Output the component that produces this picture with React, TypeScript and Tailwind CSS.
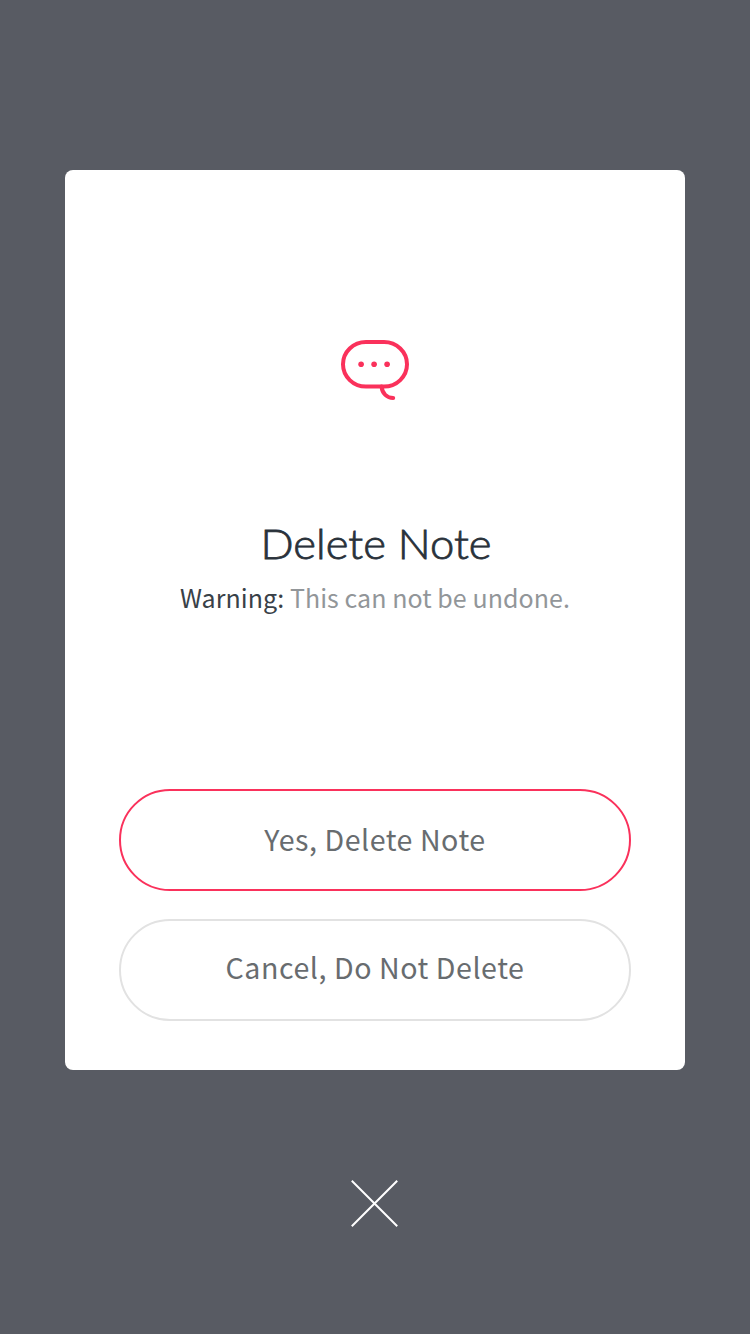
function NoteIcon() {
  return (
    <svg className="mt-[168px] block" width="72" height="64" viewBox="0 0 72 64" fill="none" stroke="#fa315b" strokeWidth="4" strokeLinecap="round">
      <rect x="4" y="4" width="64" height="44.6" rx="23" />
      <path d="M42.6 48.5C43.1 55.5 48 60 54.2 60" />
      <g fill="#fa315b" stroke="none">
        <circle cx="22.1" cy="26.2" r="2.8" />
        <circle cx="35.1" cy="26.2" r="2.8" />
        <circle cx="48.1" cy="26.2" r="2.8" />
      </g>
    </svg>
  );
}

export default function App() {
  return (
    <main className="flex h-[1334px] w-[750px] flex-col items-center bg-[#585b63] pt-[170px] font-['Noto_Sans_CJK_JP',sans-serif]">
      <section className="flex h-[900px] w-[620px] flex-col items-center rounded-lg bg-white">
        <NoteIcon />
        <h1 className="mt-[116px] h-[50px] scale-x-[1.05] whitespace-nowrap pl-[1px] font-['Lato',sans-serif] text-[41.5px] leading-[50px] font-light text-[#29313a] [-webkit-text-stroke:0.8px_#29313a]">
          Delete Note
        </h1>
        <p className="mt-[9px] h-[40px] whitespace-nowrap text-[25px] leading-[40px] tracking-[0.06px] text-[#929699]">
          <span className="text-[#394148]">Warning:</span> This can not be undone.
        </p>
        <div className="mt-[172px] flex flex-col gap-7">
          <button className="h-[102px] w-[512px] rounded-full border-2 border-[#fa315b] pb-[2px] text-[28.6px] leading-[40px] tracking-[0.53px] text-[#686c6f]">
            Yes, Delete Note
          </button>
          <button className="h-[102px] w-[512px] rounded-full border-2 border-[#e2e2e2] pb-1.5 text-[28.6px] leading-[40px] tracking-[0.55px] text-[#686c6f]">
            Cancel, Do Not Delete
          </button>
        </div>
      </section>
      <button aria-label="Close" className="mt-[109px]">
        <svg className="block" width="50" height="50" viewBox="0 0 50 50" fill="none" stroke="#ffffff" strokeWidth="2" strokeLinecap="square">
          <path d="M2.5 2.5L46.5 46.5M46.5 2.5L2.5 46.5" />
        </svg>
      </button>
    </main>
  );
}
